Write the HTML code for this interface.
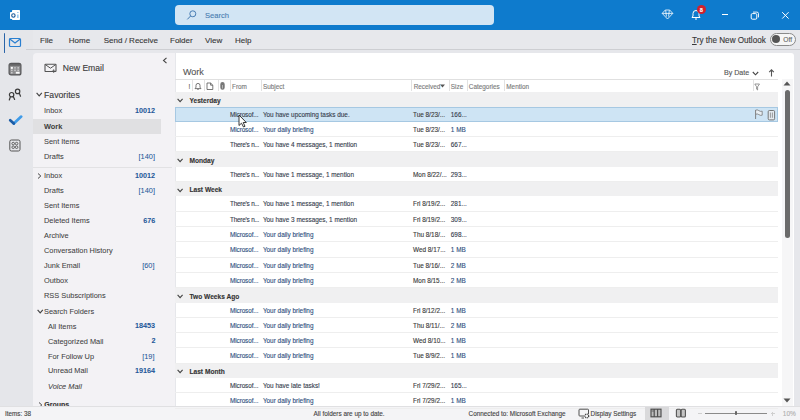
<!DOCTYPE html>
<html><head><meta charset="utf-8"><style>
html,body{margin:0;padding:0;width:800px;height:420px;overflow:hidden;background:#eceef1;}
.t{position:absolute;white-space:nowrap;font-family:"Liberation Sans",sans-serif;-webkit-text-stroke:0.12px currentColor;}
.r{position:absolute;}
</style></head><body>
<div class="r" style="left:0px;top:0px;width:800px;height:420px;background:#eceef1;"></div>
<div class="r" style="left:0px;top:0px;width:800px;height:30px;background:#0e7bcd;"></div>
<div class="r" style="left:175px;top:5px;width:319px;height:20px;background:#d2e5f4;border-radius:4px;"></div>
<div class="r" style="left:0px;top:30px;width:800px;height:19px;background:#e7e8ec;"></div>
<div class="r" style="left:0px;top:30px;width:33px;height:390px;background:#e5e6ea;"></div>
<div class="r" style="left:33px;top:49px;width:767px;height:357px;background:#e6e7eb;"></div>
<div class="r" style="left:26px;top:49px;width:774px;height:1px;background:#cdced2;"></div>
<div class="r" style="left:33px;top:53px;width:142px;height:353px;background:#f3f2f5;border-top-left-radius:4px;"></div>
<div class="r" style="left:175.5px;top:53px;width:618.5px;height:353px;background:#ffffff;border-top-right-radius:3px;"></div>
<div class="r" style="left:0px;top:406px;width:800px;height:14px;background:#f4f4f6;"></div>
<div class="r" style="left:0px;top:406px;width:800px;height:1px;background:#e0e0e2;"></div>
<svg class="r" style="left:9px;top:9px" width="12" height="12" viewBox="0 0 12 12">
<rect x="3" y="1" width="8" height="10" rx="0.8" fill="#fff"/>
<rect x="1" y="3" width="7" height="7" rx="0.8" fill="#fff"/>
<circle cx="4.4" cy="6.5" r="1.7" fill="none" stroke="#1a5a9a" stroke-width="1.1"/>
<path d="M8.9 3 V4 M8.9 5.5 V9" stroke="#5aa8e8" stroke-width="1"/>
</svg>
<svg class="r" style="left:186px;top:10px" width="11" height="11" viewBox="0 0 11 11">
<circle cx="6.8" cy="3.8" r="3" fill="none" stroke="#4278b0" stroke-width="0.95"/>
<line x1="4.6" y1="6" x2="1.3" y2="9.4" stroke="#4278b0" stroke-width="1"/>
</svg>
<div class="t" style="left:205px;top:11.00px;font-size:7.6px;line-height:10px;color:#4a7db2;font-weight:400;">Search</div>
<svg class="r" style="left:661px;top:9px" width="13" height="11" viewBox="0 0 13 11">
<path d="M4.3 1 H8.7 L11.8 4.4 L6.5 10 L1.2 4.4 Z M1.2 4.4 H11.8 M4.7 1.2 L5.4 7.6 M8.3 1.2 L7.6 7.6" fill="none" stroke="#fff" stroke-width="0.8" stroke-linejoin="round"/>
</svg>
<svg class="r" style="left:690px;top:8px" width="13" height="13" viewBox="0 0 13 13">
<path d="M2 9.5 H10 L9 8 V5.5 A3 3 0 0 0 3 5.5 V8 Z" fill="none" stroke="#fff" stroke-width="1" stroke-linejoin="round"/>
<path d="M5 11 H7" stroke="#fff" stroke-width="1"/>
</svg>
<div class="r" style="left:696.8px;top:5.1px;width:9px;height:9px;border-radius:50%;background:#d2202b;"></div>
<div class="t" style="left:697px;top:5.6px;width:8.6px;text-align:center;font-size:5.6px;line-height:8px;color:#fff;font-weight:700;">8</div>
<div class="r" style="left:722px;top:14px;width:6.2000000000000455px;height:1px;background:#fff;"></div>
<svg class="r" style="left:750px;top:11px" width="10" height="9" viewBox="0 0 10 9">
<rect x="1.2" y="2.6" width="5.6" height="5.6" rx="1.2" fill="none" stroke="#fff" stroke-width="1"/>
<path d="M3 1.1 H6.9 A1.6 1.6 0 0 1 8.5 2.7 V6.4" fill="none" stroke="#fff" stroke-width="0.9"/>
</svg>
<svg class="r" style="left:781px;top:11px" width="9" height="9" viewBox="0 0 9 9">
<path d="M1.2 1.2 L7.6 7.6 M7.6 1.2 L1.2 7.6" stroke="#fff" stroke-width="1"/>
</svg>
<div class="t" style="left:40px;top:35.50px;font-size:8px;line-height:10px;color:#383838;font-weight:400;">File</div>
<div class="t" style="left:68.75px;top:35.50px;font-size:8px;line-height:10px;color:#383838;font-weight:400;">Home</div>
<div class="t" style="left:103.75px;top:35.50px;font-size:8px;line-height:10px;color:#383838;font-weight:400;">Send / Receive</div>
<div class="t" style="left:170px;top:35.50px;font-size:8px;line-height:10px;color:#383838;font-weight:400;">Folder</div>
<div class="t" style="left:205px;top:35.50px;font-size:8px;line-height:10px;color:#383838;font-weight:400;">View</div>
<div class="t" style="left:235px;top:35.50px;font-size:8px;line-height:10px;color:#383838;font-weight:400;">Help</div>
<div class="t" style="left:692px;top:34.50px;font-size:8.15px;line-height:11px;color:#383838;font-weight:400;"><u style="text-decoration-thickness:0.6px;text-underline-offset:1px">T</u>ry the New Outlook</div>
<div class="r" style="left:770px;top:33px;width:24px;height:11px;border:1px solid #8a8a8a;border-radius:7px;background:#f6f6f6;"></div>
<div class="r" style="left:771.8px;top:35.1px;width:8.4px;height:8.4px;border-radius:50%;background:#555;"></div>
<div class="t" style="left:783.3px;top:35.40px;font-size:6.6px;line-height:9px;color:#666;font-weight:400;">Off</div>
<div class="r" style="left:3.7px;top:33px;width:1.7000000000000002px;height:19.700000000000003px;background:#2a64a8;border-radius:1px;"></div>
<svg class="r" style="left:8px;top:37px" width="14" height="11" viewBox="0 0 14 11">
<rect x="1.5" y="1.5" width="11" height="8" rx="1" fill="none" stroke="#2a7fd0" stroke-width="1.2"/>
<path d="M1.8 2 L7 6 L12.2 2" fill="none" stroke="#2a7fd0" stroke-width="1.2"/>
</svg>
<svg class="r" style="left:8px;top:62px" width="14" height="14" viewBox="0 0 14 14">
<rect x="1.1" y="1.3" width="11.8" height="11.6" rx="2" fill="#8e8e90" stroke="#555557" stroke-width="1.2"/>
<rect x="1.6" y="1.8" width="10.8" height="2" fill="#666668"/>
<g fill="#c8c8ca"><rect x="3" y="5.1" width="1.6" height="1.5"/><rect x="6.2" y="5.1" width="1.6" height="1.5"/><rect x="9.4" y="5.1" width="1.6" height="1.5"/>
<rect x="3" y="7.6" width="1.6" height="1.5"/><rect x="6.2" y="7.6" width="1.6" height="1.5"/><rect x="9.4" y="7.6" width="1.6" height="1.5"/>
<rect x="3" y="10" width="1.6" height="1.5"/></g>
<rect x="2.8" y="4.9" width="2" height="1.9" fill="#fff"/>
<rect x="7.8" y="9.8" width="3.8" height="1.9" fill="#fafafa"/>
</svg>
<svg class="r" style="left:4px;top:84px" width="24" height="20" viewBox="0 0 24 20">
<g fill="none" stroke="#3a3a3a" stroke-width="1.2" stroke-linecap="round">
<circle cx="7.6" cy="10.7" r="2.2"/>
<path d="M5.3 16 L6.4 12.8 M10.6 15.5 L9.3 12.6"/>
<circle cx="13.6" cy="7.4" r="2.2"/>
<path d="M15.3 9.1 L16.5 12.2"/>
</g></svg>
<svg class="r" style="left:8px;top:114px" width="15" height="12" viewBox="0 0 15 12">
<path d="M5.8 9.6 L13.2 2.6" stroke="#3f9be8" stroke-width="2.7" stroke-linecap="round"/>
<path d="M2.2 6.2 L5.8 9.6" stroke="#1b5ca6" stroke-width="2.7" stroke-linecap="round"/>
</svg>
<svg class="r" style="left:9px;top:139px" width="12" height="13" viewBox="0 0 12 13">
<rect x="0.8" y="1" width="10.2" height="11" rx="1.6" fill="none" stroke="#555" stroke-width="1"/>
<g fill="none" stroke="#555" stroke-width="0.9"><circle cx="4.2" cy="4.6" r="1.3"/><circle cx="7.6" cy="4.6" r="1.3"/><circle cx="4.2" cy="8.2" r="1.3"/><circle cx="7.6" cy="8.2" r="1.3"/></g>
</svg>
<svg class="r" style="left:162px;top:57px" width="6" height="7" viewBox="0 0 6 7">
<path d="M4.5 0.8 L1.5 3.5 L4.5 6.2" fill="none" stroke="#444" stroke-width="1.1"/>
</svg>
<svg class="r" style="left:44px;top:63px" width="14" height="12" viewBox="0 0 14 12">
<rect x="1" y="1.2" width="11" height="7.3" rx="0.6" fill="none" stroke="#555" stroke-width="1.1"/>
<path d="M1.3 1.6 L6.5 5.2 L11.7 1.6" fill="none" stroke="#555" stroke-width="1"/>
<path d="M9.7 6.3 V9.9 M7.9 8.1 H11.5" stroke="#555" stroke-width="0.9"/>
</svg>
<div class="t" style="left:62.8px;top:62.90px;font-size:8.6px;line-height:11px;color:#3a3a3a;font-weight:400;">New Email</div>
<svg class="r" style="left:35.6px;top:92.2px" width="7" height="5" viewBox="0 0 7 5"><path d="M0.6 0.8 L3.2 3.8 L5.8 0.8" fill="none" stroke="#444" stroke-width="1.15"/></svg>
<div class="t" style="left:44px;top:89.60px;font-size:8.7px;line-height:11px;color:#3a3a3a;font-weight:400;">Favorites</div>
<div class="r" style="left:33px;top:119px;width:128px;height:15px;background:#e0e0e2;"></div>
<div class="t" style="left:44px;top:105.40px;font-size:8.1px;line-height:11px;color:#404040;font-weight:400;transform:scaleX(0.913);transform-origin:0 50%;-webkit-text-stroke:0.05px currentColor;">Inbox</div>
<div class="t" style="right:645px;top:105.90px;font-size:7.9px;line-height:10px;color:#245899;font-weight:700;transform:scaleX(0.913);transform-origin:100% 50%;-webkit-text-stroke:0.05px currentColor;">10012</div>
<div class="t" style="left:44px;top:120.50px;font-size:8.1px;line-height:11px;color:#404040;font-weight:700;transform:scaleX(0.913);transform-origin:0 50%;-webkit-text-stroke:0.05px currentColor;">Work</div>
<div class="t" style="left:44px;top:135.50px;font-size:8.1px;line-height:11px;color:#404040;font-weight:400;transform:scaleX(0.913);transform-origin:0 50%;-webkit-text-stroke:0.05px currentColor;">Sent Items</div>
<div class="t" style="left:44px;top:150.50px;font-size:8.1px;line-height:11px;color:#404040;font-weight:400;transform:scaleX(0.913);transform-origin:0 50%;-webkit-text-stroke:0.05px currentColor;">Drafts</div>
<div class="t" style="right:645px;top:150.50px;font-size:8.1px;line-height:11px;color:#245899;font-weight:400;transform:scaleX(0.913);transform-origin:100% 50%;-webkit-text-stroke:0.05px currentColor;">[140]</div>
<div class="r" style="left:33px;top:167px;width:139px;height:1px;background:#e2e2e4;"></div>
<svg class="r" style="left:37px;top:172.6px" width="5" height="6" viewBox="0 0 5 6"><path d="M1 0.5 L3.8 3 L1 5.5" fill="none" stroke="#444" stroke-width="1"/></svg>
<div class="t" style="left:44px;top:170.40px;font-size:8.1px;line-height:11px;color:#404040;font-weight:400;transform:scaleX(0.913);transform-origin:0 50%;-webkit-text-stroke:0.05px currentColor;">Inbox</div>
<div class="t" style="right:645px;top:170.90px;font-size:7.9px;line-height:10px;color:#245899;font-weight:700;transform:scaleX(0.913);transform-origin:100% 50%;-webkit-text-stroke:0.05px currentColor;">10012</div>
<div class="t" style="left:44px;top:185.40px;font-size:8.1px;line-height:11px;color:#404040;font-weight:400;transform:scaleX(0.913);transform-origin:0 50%;-webkit-text-stroke:0.05px currentColor;">Drafts</div>
<div class="t" style="right:645px;top:185.40px;font-size:8.1px;line-height:11px;color:#245899;font-weight:400;transform:scaleX(0.913);transform-origin:100% 50%;-webkit-text-stroke:0.05px currentColor;">[140]</div>
<div class="t" style="left:44px;top:200.40px;font-size:8.1px;line-height:11px;color:#404040;font-weight:400;transform:scaleX(0.913);transform-origin:0 50%;-webkit-text-stroke:0.05px currentColor;">Sent Items</div>
<div class="t" style="left:44px;top:215.40px;font-size:8.1px;line-height:11px;color:#404040;font-weight:400;transform:scaleX(0.913);transform-origin:0 50%;-webkit-text-stroke:0.05px currentColor;">Deleted Items</div>
<div class="t" style="right:645px;top:215.90px;font-size:7.9px;line-height:10px;color:#245899;font-weight:700;transform:scaleX(0.913);transform-origin:100% 50%;-webkit-text-stroke:0.05px currentColor;">676</div>
<div class="t" style="left:44px;top:230.40px;font-size:8.1px;line-height:11px;color:#404040;font-weight:400;transform:scaleX(0.913);transform-origin:0 50%;-webkit-text-stroke:0.05px currentColor;">Archive</div>
<div class="t" style="left:44px;top:245.40px;font-size:8.1px;line-height:11px;color:#404040;font-weight:400;transform:scaleX(0.913);transform-origin:0 50%;-webkit-text-stroke:0.05px currentColor;">Conversation History</div>
<div class="t" style="left:44px;top:260.40px;font-size:8.1px;line-height:11px;color:#404040;font-weight:400;transform:scaleX(0.913);transform-origin:0 50%;-webkit-text-stroke:0.05px currentColor;">Junk Email</div>
<div class="t" style="right:645px;top:260.40px;font-size:8.1px;line-height:11px;color:#245899;font-weight:400;transform:scaleX(0.913);transform-origin:100% 50%;-webkit-text-stroke:0.05px currentColor;">[60]</div>
<div class="t" style="left:44px;top:275.40px;font-size:8.1px;line-height:11px;color:#404040;font-weight:400;transform:scaleX(0.913);transform-origin:0 50%;-webkit-text-stroke:0.05px currentColor;">Outbox</div>
<div class="t" style="left:44px;top:290.40px;font-size:8.1px;line-height:11px;color:#404040;font-weight:400;transform:scaleX(0.913);transform-origin:0 50%;-webkit-text-stroke:0.05px currentColor;">RSS Subscriptions</div>
<svg class="r" style="left:36.5px;top:308.5px" width="7" height="5" viewBox="0 0 7 5"><path d="M0.6 0.8 L3.2 3.8 L5.8 0.8" fill="none" stroke="#444" stroke-width="1.15"/></svg>
<div class="t" style="left:44px;top:305.70px;font-size:8.1px;line-height:11px;color:#404040;font-weight:400;transform:scaleX(0.913);transform-origin:0 50%;-webkit-text-stroke:0.05px currentColor;">Search Folders</div>
<div class="t" style="left:47.5px;top:320.70px;font-size:8.1px;line-height:11px;color:#404040;font-weight:400;transform:scaleX(0.913);transform-origin:0 50%;-webkit-text-stroke:0.05px currentColor;">All Items</div>
<div class="t" style="right:645px;top:321.20px;font-size:7.9px;line-height:10px;color:#245899;font-weight:700;transform:scaleX(0.913);transform-origin:100% 50%;-webkit-text-stroke:0.05px currentColor;">18453</div>
<div class="t" style="left:47.5px;top:335.80px;font-size:8.1px;line-height:11px;color:#404040;font-weight:400;transform:scaleX(0.913);transform-origin:0 50%;-webkit-text-stroke:0.05px currentColor;">Categorized Mail</div>
<div class="t" style="right:645px;top:336.30px;font-size:7.9px;line-height:10px;color:#245899;font-weight:700;transform:scaleX(0.913);transform-origin:100% 50%;-webkit-text-stroke:0.05px currentColor;">2</div>
<div class="t" style="left:47.5px;top:350.60px;font-size:8.1px;line-height:11px;color:#404040;font-weight:400;transform:scaleX(0.913);transform-origin:0 50%;-webkit-text-stroke:0.05px currentColor;">For Follow Up</div>
<div class="t" style="right:645px;top:350.60px;font-size:8.1px;line-height:11px;color:#245899;font-weight:400;transform:scaleX(0.913);transform-origin:100% 50%;-webkit-text-stroke:0.05px currentColor;">[19]</div>
<div class="t" style="left:47.5px;top:365.30px;font-size:8.1px;line-height:11px;color:#404040;font-weight:400;transform:scaleX(0.913);transform-origin:0 50%;-webkit-text-stroke:0.05px currentColor;">Unread Mail</div>
<div class="t" style="right:645px;top:365.80px;font-size:7.9px;line-height:10px;color:#245899;font-weight:700;transform:scaleX(0.913);transform-origin:100% 50%;-webkit-text-stroke:0.05px currentColor;">19164</div>
<div class="t" style="left:47.5px;top:380.50px;font-size:8.1px;line-height:11px;color:#404040;font-weight:400;transform:scaleX(0.913);transform-origin:0 50%;-webkit-text-stroke:0.05px currentColor;font-style:italic;">Voice Mail</div>
<svg class="r" style="left:38px;top:401.5px" width="5" height="6" viewBox="0 0 5 6"><path d="M1 0.5 L3.8 3 L1 5.5" fill="none" stroke="#444" stroke-width="1"/></svg>
<div class="t" style="left:44.3px;top:400.10px;font-size:7px;line-height:9px;color:#333;font-weight:700;">Groups</div>
<div class="r" style="left:0px;top:406px;width:800px;height:14px;background:#f4f4f6;"></div>
<div class="r" style="left:0px;top:406px;width:800px;height:1px;background:#e0e0e2;"></div>
<div class="t" style="left:183px;top:66.30px;font-size:9px;line-height:12px;color:#555;font-weight:400;">Work</div>
<div class="t" style="left:724px;top:68.90px;font-size:7.1px;line-height:9px;color:#555;font-weight:400;">By Date</div>
<svg class="r" style="left:752px;top:71px" width="7" height="5" viewBox="0 0 7 5"><path d="M0.8 1 L3.5 3.8 L6.2 1" fill="none" stroke="#444" stroke-width="1.1"/></svg>
<svg class="r" style="left:767.5px;top:69px" width="7" height="8" viewBox="0 0 7 8"><path d="M3.5 7.5 V1 M1.2 3.2 L3.5 0.9 L5.8 3.2" fill="none" stroke="#555" stroke-width="1.1"/></svg>
<div class="r" style="left:175px;top:78.5px;width:603px;height:1.0px;background:#e0e0e0;"></div>
<div class="r" style="left:175px;top:92px;width:603px;height:1px;background:#e4e4e4;"></div>
<div class="r" style="left:191.7px;top:80px;width:0.8000000000000114px;height:11px;background:#e2e2e2;"></div>
<div class="r" style="left:203.7px;top:80px;width:0.8000000000000114px;height:11px;background:#e2e2e2;"></div>
<div class="r" style="left:218.3px;top:80px;width:0.8000000000000114px;height:11px;background:#e2e2e2;"></div>
<div class="r" style="left:230px;top:80px;width:0.8000000000000114px;height:11px;background:#e2e2e2;"></div>
<div class="r" style="left:260.6px;top:80px;width:0.8000000000000114px;height:11px;background:#e2e2e2;"></div>
<div class="r" style="left:411.4px;top:80px;width:0.8000000000000114px;height:11px;background:#e2e2e2;"></div>
<div class="r" style="left:448.5px;top:80px;width:0.8000000000000114px;height:11px;background:#e2e2e2;"></div>
<div class="r" style="left:466.5px;top:80px;width:0.8000000000000114px;height:11px;background:#e2e2e2;"></div>
<div class="r" style="left:503.7px;top:80px;width:0.8000000000000114px;height:11px;background:#e2e2e2;"></div>
<div class="r" style="left:752.5px;top:80px;width:0.7999999999999545px;height:11px;background:#e2e2e2;"></div>
<div class="t" style="left:188.6px;top:82.90px;font-size:6.4px;line-height:8px;color:#555;font-weight:400;">!</div>
<svg class="r" style="left:193.5px;top:82px" width="8" height="8" viewBox="0 0 8 8"><path d="M1 6.6 H7 L6 5.2 V3.4 A2 2 0 0 0 2 3.4 V5.2 Z M3.3 7.4 H4.7" fill="none" stroke="#555" stroke-width="0.8" stroke-linejoin="round"/></svg>
<svg class="r" style="left:205.5px;top:82px" width="8" height="8.5" viewBox="0 0 8 8.5"><path d="M1 1 H4.6 L6.8 3.2 V7.5 H1 Z M4.6 1 V3.2 H6.8" fill="none" stroke="#555" stroke-width="0.8" stroke-linejoin="round"/></svg>
<svg class="r" style="left:219px;top:82px" width="7" height="8" viewBox="0 0 7 8"><path d="M1.3 2.2 V5.5 A2.2 2.2 0 0 0 5.7 5.5 V2.2 A2.2 2.2 0 0 0 1.3 2.2 Z" fill="#777"/><path d="M3.5 3 V6.5" stroke="#ddd" stroke-width="0.6"/></svg>
<div class="t" style="left:232px;top:82.90px;font-size:6.4px;line-height:8px;color:#7a7a7a;font-weight:400;">From</div>
<div class="t" style="left:263px;top:82.90px;font-size:6.4px;line-height:8px;color:#7a7a7a;font-weight:400;">Subject</div>
<div class="t" style="left:413.7px;top:82.90px;font-size:6.4px;line-height:8px;color:#7a7a7a;font-weight:400;">Received</div>
<svg class="r" style="left:440px;top:84px" width="5" height="4" viewBox="0 0 5 4"><path d="M0 0.5 H5 L2.5 3.5 Z" fill="#555"/></svg>
<div class="t" style="left:450.8px;top:82.90px;font-size:6.4px;line-height:8px;color:#7a7a7a;font-weight:400;">Size</div>
<div class="t" style="left:468.8px;top:82.90px;font-size:6.4px;line-height:8px;color:#7a7a7a;font-weight:400;">Categories</div>
<div class="t" style="left:506.3px;top:82.90px;font-size:6.4px;line-height:8px;color:#7a7a7a;font-weight:400;">Mention</div>
<svg class="r" style="left:754px;top:82.5px" width="7" height="8" viewBox="0 0 7 8"><path d="M0.8 1 H5.5 L3.6 3.8 V7 L2.6 6.2 V3.8 Z" fill="none" stroke="#777" stroke-width="0.75"/></svg>
<div class="r" style="left:175px;top:92.26px;width:603px;height:14.329999999999998px;background:#f0f0f1;"></div>
<svg class="r" style="left:177.3px;top:97.86px" width="7" height="5" viewBox="0 0 7 5"><path d="M0.6 0.8 L3.1 3.6 L5.6 0.8" fill="none" stroke="#444" stroke-width="1.1"/></svg>
<div class="t" style="left:189.5px;top:95.61px;font-size:6.6px;line-height:9px;color:#333;font-weight:700;">Yesterday</div>
<div class="r" style="left:175px;top:106.59px;width:603px;height:15.299999999999997px;background:#cee4f4;box-shadow:inset 0 0 0 1px #a6c8e2;"></div>
<div class="t" style="left:230px;top:110.54px;font-size:6.4px;line-height:8px;color:#36404e;font-weight:400;letter-spacing:-0.1px;">Microsof...</div>
<div class="t" style="left:262.9px;top:110.54px;font-size:6.4px;line-height:8px;color:#36404e;font-weight:400;">You have upcoming tasks due.</div>
<div class="t" style="left:413px;top:110.54px;font-size:6.4px;line-height:8px;color:#3a3a3a;font-weight:400;">Tue 8/23/...</div>
<div class="t" style="left:450.8px;top:110.54px;font-size:6.4px;line-height:8px;color:#36404e;font-weight:400;">166...</div>
<div class="r" style="left:175px;top:136.19px;width:603px;height:1.0px;background:#eeeeee;"></div>
<div class="t" style="left:230px;top:125.84px;font-size:6.4px;line-height:8px;color:#30507e;font-weight:400;letter-spacing:-0.1px;">Microsof...</div>
<div class="t" style="left:262.9px;top:125.84px;font-size:6.4px;line-height:8px;color:#30507e;font-weight:400;">Your daily briefing</div>
<div class="t" style="left:413px;top:125.84px;font-size:6.4px;line-height:8px;color:#3a3a3a;font-weight:400;">Tue 8/23/...</div>
<div class="t" style="left:450.8px;top:125.84px;font-size:6.4px;line-height:8px;color:#30507e;font-weight:400;">1 MB</div>
<div class="r" style="left:175px;top:151.49px;width:603px;height:1.0px;background:#eeeeee;"></div>
<div class="t" style="left:230px;top:141.14px;font-size:6.4px;line-height:8px;color:#36404e;font-weight:400;letter-spacing:-0.22px;">There's n...</div>
<div class="t" style="left:262.9px;top:141.14px;font-size:6.4px;line-height:8px;color:#36404e;font-weight:400;">You have 4 messages, 1 mention</div>
<div class="t" style="left:413px;top:141.14px;font-size:6.4px;line-height:8px;color:#3a3a3a;font-weight:400;">Tue 8/23/...</div>
<div class="t" style="left:450.8px;top:141.14px;font-size:6.4px;line-height:8px;color:#36404e;font-weight:400;">667...</div>
<div class="r" style="left:175px;top:152.49px;width:603px;height:14.330000000000013px;background:#f0f0f1;"></div>
<svg class="r" style="left:177.3px;top:158.09px" width="7" height="5" viewBox="0 0 7 5"><path d="M0.6 0.8 L3.1 3.6 L5.6 0.8" fill="none" stroke="#444" stroke-width="1.1"/></svg>
<div class="t" style="left:189.5px;top:155.84px;font-size:6.6px;line-height:9px;color:#333;font-weight:700;">Monday</div>
<div class="r" style="left:175px;top:181.12000000000003px;width:603px;height:1.0px;background:#eeeeee;"></div>
<div class="t" style="left:230px;top:170.77px;font-size:6.4px;line-height:8px;color:#36404e;font-weight:400;letter-spacing:-0.22px;">There's n...</div>
<div class="t" style="left:262.9px;top:170.77px;font-size:6.4px;line-height:8px;color:#36404e;font-weight:400;">You have 1 message, 1 mention</div>
<div class="t" style="left:413px;top:170.77px;font-size:6.4px;line-height:8px;color:#3a3a3a;font-weight:400;">Mon 8/22/...</div>
<div class="t" style="left:450.8px;top:170.77px;font-size:6.4px;line-height:8px;color:#36404e;font-weight:400;">293...</div>
<div class="r" style="left:175px;top:182.12000000000003px;width:603px;height:14.330000000000013px;background:#f0f0f1;"></div>
<svg class="r" style="left:177.3px;top:187.72000000000003px" width="7" height="5" viewBox="0 0 7 5"><path d="M0.6 0.8 L3.1 3.6 L5.6 0.8" fill="none" stroke="#444" stroke-width="1.1"/></svg>
<div class="t" style="left:189.5px;top:185.47px;font-size:6.6px;line-height:9px;color:#333;font-weight:700;">Last Week</div>
<div class="r" style="left:175px;top:210.75000000000006px;width:603px;height:1.0px;background:#eeeeee;"></div>
<div class="t" style="left:230px;top:200.40px;font-size:6.4px;line-height:8px;color:#36404e;font-weight:400;letter-spacing:-0.22px;">There's n...</div>
<div class="t" style="left:262.9px;top:200.40px;font-size:6.4px;line-height:8px;color:#36404e;font-weight:400;">You have 1 message, 1 mention</div>
<div class="t" style="left:413px;top:200.40px;font-size:6.4px;line-height:8px;color:#3a3a3a;font-weight:400;">Fri 8/19/2...</div>
<div class="t" style="left:450.8px;top:200.40px;font-size:6.4px;line-height:8px;color:#36404e;font-weight:400;">281...</div>
<div class="r" style="left:175px;top:226.05000000000007px;width:603px;height:1.0px;background:#eeeeee;"></div>
<div class="t" style="left:230px;top:215.70px;font-size:6.4px;line-height:8px;color:#36404e;font-weight:400;letter-spacing:-0.22px;">There's n...</div>
<div class="t" style="left:262.9px;top:215.70px;font-size:6.4px;line-height:8px;color:#36404e;font-weight:400;">You have 3 messages, 1 mention</div>
<div class="t" style="left:413px;top:215.70px;font-size:6.4px;line-height:8px;color:#3a3a3a;font-weight:400;">Fri 8/19/2...</div>
<div class="t" style="left:450.8px;top:215.70px;font-size:6.4px;line-height:8px;color:#36404e;font-weight:400;">309...</div>
<div class="r" style="left:175px;top:241.35000000000008px;width:603px;height:1.0px;background:#eeeeee;"></div>
<div class="t" style="left:230px;top:231.00px;font-size:6.4px;line-height:8px;color:#30507e;font-weight:400;letter-spacing:-0.1px;">Microsof...</div>
<div class="t" style="left:262.9px;top:231.00px;font-size:6.4px;line-height:8px;color:#30507e;font-weight:400;">Your daily briefing</div>
<div class="t" style="left:413px;top:231.00px;font-size:6.4px;line-height:8px;color:#3a3a3a;font-weight:400;">Thu 8/18/...</div>
<div class="t" style="left:450.8px;top:231.00px;font-size:6.4px;line-height:8px;color:#36404e;font-weight:400;">698...</div>
<div class="r" style="left:175px;top:256.6500000000001px;width:603px;height:1.0px;background:#eeeeee;"></div>
<div class="t" style="left:230px;top:246.30px;font-size:6.4px;line-height:8px;color:#30507e;font-weight:400;letter-spacing:-0.1px;">Microsof...</div>
<div class="t" style="left:262.9px;top:246.30px;font-size:6.4px;line-height:8px;color:#30507e;font-weight:400;">Your daily briefing</div>
<div class="t" style="left:413px;top:246.30px;font-size:6.4px;line-height:8px;color:#3a3a3a;font-weight:400;">Wed 8/17...</div>
<div class="t" style="left:450.8px;top:246.30px;font-size:6.4px;line-height:8px;color:#30507e;font-weight:400;">1 MB</div>
<div class="r" style="left:175px;top:271.9500000000001px;width:603px;height:1.0px;background:#eeeeee;"></div>
<div class="t" style="left:230px;top:261.60px;font-size:6.4px;line-height:8px;color:#30507e;font-weight:400;letter-spacing:-0.1px;">Microsof...</div>
<div class="t" style="left:262.9px;top:261.60px;font-size:6.4px;line-height:8px;color:#30507e;font-weight:400;">Your daily briefing</div>
<div class="t" style="left:413px;top:261.60px;font-size:6.4px;line-height:8px;color:#3a3a3a;font-weight:400;">Tue 8/16/...</div>
<div class="t" style="left:450.8px;top:261.60px;font-size:6.4px;line-height:8px;color:#30507e;font-weight:400;">2 MB</div>
<div class="r" style="left:175px;top:287.2500000000001px;width:603px;height:1.0px;background:#eeeeee;"></div>
<div class="t" style="left:230px;top:276.90px;font-size:6.4px;line-height:8px;color:#30507e;font-weight:400;letter-spacing:-0.1px;">Microsof...</div>
<div class="t" style="left:262.9px;top:276.90px;font-size:6.4px;line-height:8px;color:#30507e;font-weight:400;">Your daily briefing</div>
<div class="t" style="left:413px;top:276.90px;font-size:6.4px;line-height:8px;color:#3a3a3a;font-weight:400;">Mon 8/15...</div>
<div class="t" style="left:450.8px;top:276.90px;font-size:6.4px;line-height:8px;color:#30507e;font-weight:400;">2 MB</div>
<div class="r" style="left:175px;top:288.2500000000001px;width:603px;height:14.329999999999984px;background:#f0f0f1;"></div>
<svg class="r" style="left:177.3px;top:293.85000000000014px" width="7" height="5" viewBox="0 0 7 5"><path d="M0.6 0.8 L3.1 3.6 L5.6 0.8" fill="none" stroke="#444" stroke-width="1.1"/></svg>
<div class="t" style="left:189.5px;top:291.60px;font-size:6.6px;line-height:9px;color:#333;font-weight:700;">Two Weeks Ago</div>
<div class="r" style="left:175px;top:316.8800000000001px;width:603px;height:1.0px;background:#eeeeee;"></div>
<div class="t" style="left:230px;top:306.53px;font-size:6.4px;line-height:8px;color:#30507e;font-weight:400;letter-spacing:-0.1px;">Microsof...</div>
<div class="t" style="left:262.9px;top:306.53px;font-size:6.4px;line-height:8px;color:#30507e;font-weight:400;">Your daily briefing</div>
<div class="t" style="left:413px;top:306.53px;font-size:6.4px;line-height:8px;color:#3a3a3a;font-weight:400;">Fri 8/12/2...</div>
<div class="t" style="left:450.8px;top:306.53px;font-size:6.4px;line-height:8px;color:#30507e;font-weight:400;">1 MB</div>
<div class="r" style="left:175px;top:332.1800000000001px;width:603px;height:1.0px;background:#eeeeee;"></div>
<div class="t" style="left:230px;top:321.83px;font-size:6.4px;line-height:8px;color:#30507e;font-weight:400;letter-spacing:-0.1px;">Microsof...</div>
<div class="t" style="left:262.9px;top:321.83px;font-size:6.4px;line-height:8px;color:#30507e;font-weight:400;">Your daily briefing</div>
<div class="t" style="left:413px;top:321.83px;font-size:6.4px;line-height:8px;color:#3a3a3a;font-weight:400;">Thu 8/11/...</div>
<div class="t" style="left:450.8px;top:321.83px;font-size:6.4px;line-height:8px;color:#30507e;font-weight:400;">2 MB</div>
<div class="r" style="left:175px;top:347.48000000000013px;width:603px;height:1.0px;background:#eeeeee;"></div>
<div class="t" style="left:230px;top:337.13px;font-size:6.4px;line-height:8px;color:#30507e;font-weight:400;letter-spacing:-0.1px;">Microsof...</div>
<div class="t" style="left:262.9px;top:337.13px;font-size:6.4px;line-height:8px;color:#30507e;font-weight:400;">Your daily briefing</div>
<div class="t" style="left:413px;top:337.13px;font-size:6.4px;line-height:8px;color:#3a3a3a;font-weight:400;">Wed 8/10...</div>
<div class="t" style="left:450.8px;top:337.13px;font-size:6.4px;line-height:8px;color:#30507e;font-weight:400;">1 MB</div>
<div class="r" style="left:175px;top:362.78000000000014px;width:603px;height:1.0px;background:#eeeeee;"></div>
<div class="t" style="left:230px;top:352.43px;font-size:6.4px;line-height:8px;color:#30507e;font-weight:400;letter-spacing:-0.1px;">Microsof...</div>
<div class="t" style="left:262.9px;top:352.43px;font-size:6.4px;line-height:8px;color:#30507e;font-weight:400;">Your daily briefing</div>
<div class="t" style="left:413px;top:352.43px;font-size:6.4px;line-height:8px;color:#3a3a3a;font-weight:400;">Tue 8/9/2...</div>
<div class="t" style="left:450.8px;top:352.43px;font-size:6.4px;line-height:8px;color:#30507e;font-weight:400;">1 MB</div>
<div class="r" style="left:175px;top:363.78000000000014px;width:603px;height:14.329999999999984px;background:#f0f0f1;"></div>
<svg class="r" style="left:177.3px;top:369.38000000000017px" width="7" height="5" viewBox="0 0 7 5"><path d="M0.6 0.8 L3.1 3.6 L5.6 0.8" fill="none" stroke="#444" stroke-width="1.1"/></svg>
<div class="t" style="left:189.5px;top:367.13px;font-size:6.6px;line-height:9px;color:#333;font-weight:700;">Last Month</div>
<div class="r" style="left:175px;top:392.41000000000014px;width:603px;height:1.0px;background:#eeeeee;"></div>
<div class="t" style="left:230px;top:382.06px;font-size:6.4px;line-height:8px;color:#36404e;font-weight:400;letter-spacing:-0.1px;">Microsof...</div>
<div class="t" style="left:262.9px;top:382.06px;font-size:6.4px;line-height:8px;color:#36404e;font-weight:400;">You have late tasks!</div>
<div class="t" style="left:413px;top:382.06px;font-size:6.4px;line-height:8px;color:#3a3a3a;font-weight:400;">Fri 7/29/2...</div>
<div class="t" style="left:450.8px;top:382.06px;font-size:6.4px;line-height:8px;color:#36404e;font-weight:400;">165...</div>
<div class="r" style="left:175px;top:407.71000000000015px;width:603px;height:1.0px;background:#eeeeee;"></div>
<div class="t" style="left:230px;top:397.36px;font-size:6.4px;line-height:8px;color:#30507e;font-weight:400;letter-spacing:-0.1px;">Microsof...</div>
<div class="t" style="left:262.9px;top:397.36px;font-size:6.4px;line-height:8px;color:#30507e;font-weight:400;">Your daily briefing</div>
<div class="t" style="left:413px;top:397.36px;font-size:6.4px;line-height:8px;color:#3a3a3a;font-weight:400;">Fri 7/29/2...</div>
<div class="t" style="left:450.8px;top:397.36px;font-size:6.4px;line-height:8px;color:#30507e;font-weight:400;">1 MB</div>
<svg class="r" style="left:754px;top:109px" width="10" height="11" viewBox="0 0 10 11"><path d="M1.6 10 V1" stroke="#777" stroke-width="0.9"/><path d="M1.6 1.2 Q3.2 0.3 4.8 1.6 Q6.4 2.8 8.2 2.2 V6.2 Q6.4 6.8 4.8 5.6 Q3.2 4.4 1.6 5.3 Z" fill="#e8eef3" stroke="#777" stroke-width="0.8"/></svg>
<svg class="r" style="left:767px;top:109px" width="9" height="12" viewBox="0 0 9 12"><rect x="1.2" y="1.5" width="6.4" height="9.4" rx="1.2" fill="#e4eaef" stroke="#6a6a6a" stroke-width="0.9"/><path d="M3.4 3.5 V8.8 M5.4 3.5 V8.8" stroke="#777" stroke-width="0.7"/></svg>
<svg class="r" style="left:238.4px;top:114.3px" width="9" height="14" viewBox="0 0 9 14">
<path d="M1 1 V11.5 L3.5 9.2 L5.5 13 L7 12.3 L5.2 8.5 H8.3 Z" fill="#fff" stroke="#222" stroke-width="0.9" stroke-linejoin="round"/>
</svg>
<div class="r" style="left:782px;top:79px;width:11px;height:327px;background:#f6f6f7;"></div>
<svg class="r" style="left:783px;top:81px" width="8" height="5" viewBox="0 0 8 5"><path d="M0.5 4.5 L4 0.5 L7.5 4.5 Z" fill="#555"/></svg>
<div class="r" style="left:784.6px;top:89.8px;width:5.0px;height:148.5px;background:#6b6b6b;border-radius:2.5px;"></div>
<svg class="r" style="left:783px;top:398px" width="8" height="5" viewBox="0 0 8 5"><path d="M0.5 0.5 L4 4.5 L7.5 0.5 Z" fill="#555"/></svg>
<div class="t" style="left:5px;top:409.60px;font-size:6.35px;line-height:8px;color:#444;font-weight:400;">Items: 38</div>
<div class="t" style="left:313.6px;top:409.70px;font-size:6.4px;line-height:8px;color:#444;font-weight:400;">All folders are up to date.</div>
<div class="t" style="left:468.6px;top:409.50px;font-size:6.35px;line-height:8px;color:#444;font-weight:400;">Connected to: Microsoft Exchange</div>
<svg class="r" style="left:578px;top:407.5px" width="13" height="12" viewBox="0 0 13 12"><rect x="1" y="1.2" width="9.5" height="6.8" rx="0.8" fill="none" stroke="#505050" stroke-width="1"/><path d="M3.5 10 H6" stroke="#505050" stroke-width="1"/><circle cx="8.8" cy="8" r="2.6" fill="#f4f4f6"/><circle cx="8.8" cy="8" r="1.9" fill="none" stroke="#404040" stroke-width="1.3" stroke-dasharray="1 0.6"/></svg>
<div class="t" style="left:590.6px;top:409.50px;font-size:6.35px;line-height:8px;color:#444;font-weight:400;">Display Settings</div>
<div class="r" style="left:644.5px;top:406.5px;width:24.200000000000045px;height:13.5px;background:#d9d9db;"></div>
<svg class="r" style="left:650px;top:408px" width="12" height="10" viewBox="0 0 12 10"><rect x="1" y="1.2" width="10" height="7.6" fill="#bdbdbd" stroke="#505050" stroke-width="1.2"/><path d="M4.2 1 V9 M7.6 1 V9" stroke="#505050" stroke-width="1.2"/><path d="M1.5 3 H4" stroke="#505050" stroke-width="0.8"/></svg>
<svg class="r" style="left:675px;top:408px" width="12" height="10" viewBox="0 0 12 10"><rect x="1.4" y="1.2" width="4.2" height="7.8" rx="1" fill="#c4c4c4" stroke="#555" stroke-width="1.1"/><rect x="6.2" y="1.2" width="4.2" height="7.8" rx="1" fill="#c4c4c4" stroke="#555" stroke-width="1.1"/></svg>
<div class="r" style="left:697.5px;top:413px;width:4.0px;height:1px;background:#cfcfcf;"></div>
<div class="r" style="left:705px;top:412.8px;width:61.799999999999955px;height:1.0px;background:#8a8a8a;"></div>
<div class="r" style="left:735px;top:411.4px;width:1.6000000000000227px;height:3.8000000000000114px;background:#666;border-radius:0.8px;"></div>
<div class="r" style="left:770.5px;top:413px;width:4.0px;height:1px;background:#cfcfcf;"></div>
<div class="r" style="left:772px;top:411.5px;width:1px;height:4.0px;background:#cfcfcf;"></div>
<div class="t" style="left:782.8px;top:409.60px;font-size:6.5px;line-height:8px;color:#b0b0b0;font-weight:400;">10%</div>
</body></html>
